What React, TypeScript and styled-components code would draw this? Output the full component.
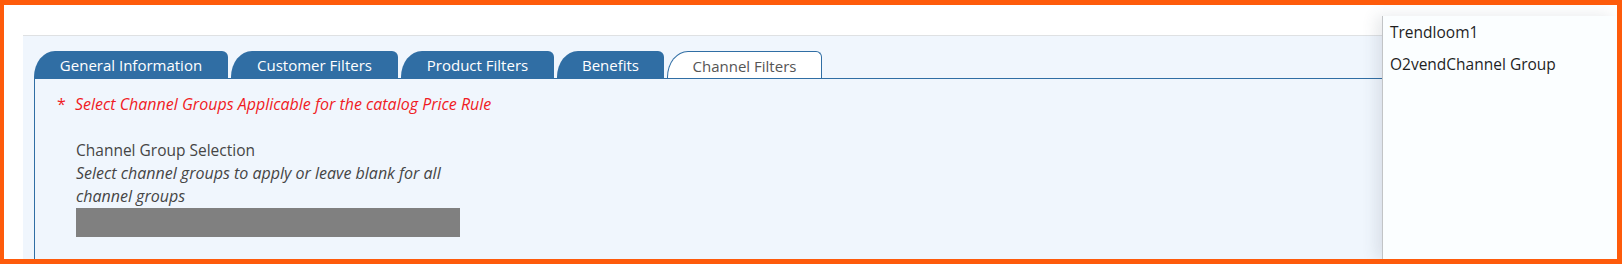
import React from "react";
import styled, { createGlobalStyle } from "styled-components";

const palette = {
  orange: "#fe5b0b",
  tabBlue: "#306ea4",
  panel: "#f0f6fd",
  red: "#f01b24",
  text: "#454545",
  grey: "#808080",
};

const GlobalStyle = createGlobalStyle`
  html, body {
    margin: 0;
    padding: 0;
    background: #ffffff;
  }
  body {
    font-family: "Open Sans", "Noto Sans", sans-serif;
  }
`;

const Frame = styled.div`
  position: relative;
  box-sizing: border-box;
  width: 1622px;
  height: 264px;
  border-style: solid;
  border-color: ${palette.orange};
  border-width: 5px 5px 5px 4px;
  background: #ffffff;
  padding: 30px 0 0 19px;
  display: flex;
  flex-direction: column;
  overflow: hidden;
`;

const Panel = styled.div`
  flex: 1;
  display: flex;
  flex-direction: column;
  background: ${palette.panel};
  border-top: 1px solid #dfe1e3;
  padding: 15px 0 0 11px;
`;

const TabRow = styled.div`
  display: flex;
  gap: 3px;
  height: 27px;
`;

const Tab = styled.div<{ active?: boolean; w: number }>`
  box-sizing: border-box;
  width: ${(p) => p.w}px;
  height: 27px;
  padding-top: 1px;
  display: flex;
  align-items: center;
  justify-content: center;
  font-size: 15px;
  white-space: nowrap;
  border-radius: 21px 6px 0 0 / 26px 6px 0 0;
  background: ${(p) => (p.active ? "#ffffff" : palette.tabBlue)};
  color: ${(p) => (p.active ? "#555555" : "#ffffff")};
  border: ${(p) => (p.active ? `1px solid ${palette.tabBlue}` : "none")};
  border-bottom: none;
`;

const Content = styled.div`
  flex: 1;
  border-left: 1px solid ${palette.tabBlue};
  border-top: 1px solid ${palette.tabBlue};
  padding: 15px 0 0 22px;
`;

const Required = styled.div`
  color: ${palette.red};
  font-style: italic;
  font-size: 16px;
  line-height: 20px;
  white-space: nowrap;

  span {
    font-style: normal;
    margin-right: 5px;
  }
`;

const Field = styled.div`
  margin: 25px 0 0 19px;
  width: 384px;
  color: ${palette.text};
  font-size: 15.5px;
  line-height: 23px;
`;

const Label = styled.div``;

const Hint = styled.div`
  font-style: italic;
  font-size: 16px;
  white-space: nowrap;
`;

const SelectBox = styled.div`
  height: 29px;
  background: ${palette.grey};
`;

const Dropdown = styled.ul`
  position: absolute;
  top: 11px;
  left: 1378px;
  right: 0;
  bottom: 0;
  margin: 0;
  padding: 0;
  list-style: none;
  background: #fbfeff;
  border-left: 1px solid #c2c4c6;
  box-shadow: -6px 0 14px rgba(60, 70, 90, 0.12);
`;

const Option = styled.li`
  padding-left: 7px;
  line-height: 32px;
  font-size: 15.5px;
  color: #1f1f1f;
  white-space: nowrap;
`;

const tabs = [
  { label: "General Information", width: 194 },
  { label: "Customer Filters", width: 167 },
  { label: "Product Filters", width: 153 },
  { label: "Benefits", width: 107 },
  { label: "Channel Filters", width: 155, active: true },
];

const App = () => {
  return (
    <>
      <GlobalStyle />
      <Frame>
        <Panel>
          <TabRow>
            {tabs.map((t) => (
              <Tab key={t.label} w={t.width} active={t.active}>
                {t.label}
              </Tab>
            ))}
          </TabRow>
          <Content>
            <Required>
              <span>*</span> Select Channel Groups Applicable for the catalog Price Rule
            </Required>
            <Field>
              <Label>Channel Group Selection</Label>
              <Hint>Select channel groups to apply or leave blank for all</Hint>
              <Hint>channel groups</Hint>
              <SelectBox />
            </Field>
          </Content>
        </Panel>
        <Dropdown>
          <Option>Trendloom1</Option>
          <Option>O2vendChannel Group</Option>
        </Dropdown>
      </Frame>
    </>
  );
};

export default App;
